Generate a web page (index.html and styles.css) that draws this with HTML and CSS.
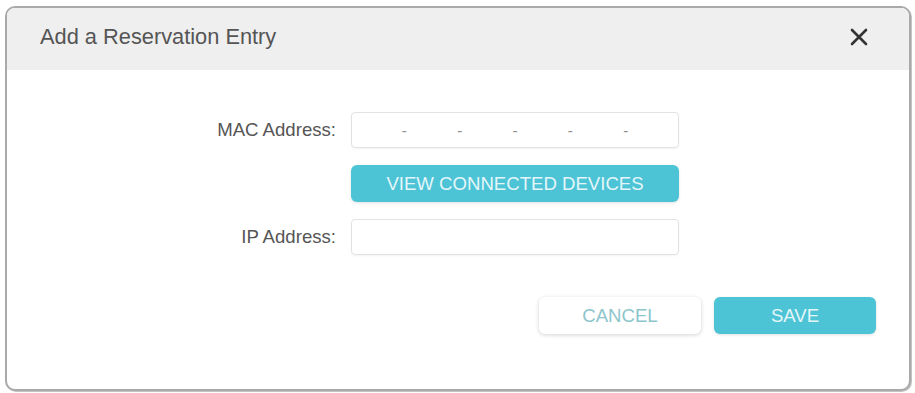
FILE: index.html
```html
<!DOCTYPE html>
<html lang="en">
<head>
    <meta charset="UTF-8">
    <meta name="viewport" content="width=device-width, initial-scale=1.0">
    <title>Add a Reservation Entry</title>
    <link rel="stylesheet" href="styles.css">
</head>
<body>
    <div class="dialog">
        <div class="dialog-header">
            <h2>Add a Reservation Entry</h2>
            <button class="close-btn" aria-label="Close">
                <svg width="18" height="18" viewBox="0 0 18 18">
                    <path d="M2 2 L16 16 M16 2 L2 16" stroke="#333" stroke-width="2.6" stroke-linecap="round" fill="none"/>
                </svg>
            </button>
        </div>

        <div class="dialog-body">
            <label class="field-label">MAC Address:</label>
            <div class="text-box mac-box">
                <input type="text"><span class="sep">-</span>
                <input type="text"><span class="sep">-</span>
                <input type="text"><span class="sep">-</span>
                <input type="text"><span class="sep">-</span>
                <input type="text"><span class="sep">-</span>
                <input type="text">
            </div>

            <span></span>
            <button class="btn btn-primary">VIEW CONNECTED DEVICES</button>

            <label class="field-label">IP Address:</label>
            <div class="text-box">
                <input type="text">
            </div>
        </div>

        <div class="dialog-footer">
            <button class="btn btn-default">CANCEL</button>
            <button class="btn btn-primary">SAVE</button>
        </div>
    </div>
</body>
</html>
```

FILE: styles.css
```css
* {
    margin: 0;
    padding: 0;
    box-sizing: border-box;
}

body {
    font-family: 'Liberation Sans', Arial, sans-serif;
    background: #fff;
    width: 915px;
    height: 393px;
    padding: 6px 4px 2px 5px;
}

.dialog {
    height: 385px;
    border: 2px solid #a9a9a9;
    border-radius: 10px;
    box-shadow: 1px 1px 0 #c4c4c4;
    background: #fff;
    overflow: hidden;
    display: flex;
    flex-direction: column;
}

.dialog-header {
    height: 62px;
    background: #efefef;
    display: flex;
    align-items: center;
    justify-content: space-between;
    padding: 0 40px 4px 33px;
}

.dialog-header h2 {
    font-size: 21.8px;
    font-weight: normal;
    color: #555;
}

.close-btn {
    background: none;
    border: none;
    width: 20px;
    height: 20px;
    display: flex;
    align-items: center;
    justify-content: center;
    cursor: pointer;
}

.dialog-body {
    display: grid;
    grid-template-columns: 329px 328px;
    column-gap: 15px;
    row-gap: 17px;
    align-items: center;
    padding-top: 42px;
}

.field-label {
    text-align: right;
    font-size: 18.6px;
    color: #555;
}

.text-box {
    height: 36px;
    border: 1px solid #e2e2e2;
    border-radius: 4px;
    box-shadow: 0 1px 2px rgba(0,0,0,0.05);
    display: flex;
    align-items: center;
}

.text-box input {
    flex: 1;
    min-width: 0;
    height: 100%;
    border: none;
    background: transparent;
    outline: none;
}

.sep {
    width: 6px;
    text-align: center;
    font-size: 15px;
    color: #8a8a8a;
}

.btn {
    height: 37px;
    border-radius: 6px;
    font-family: 'Liberation Sans', Arial, sans-serif;
    font-size: 18.6px;
    cursor: pointer;
    border: none;
}

.btn-primary {
    background: #4cc4d6;
    color: #e4f6f9;
    box-shadow: 0 1px 3px rgba(0,0,0,0.12);
}

.btn-default {
    background: #fff;
    color: #8cc5cc;
    box-shadow: 0 1px 4px rgba(0,0,0,0.18);
}

.dialog-footer {
    display: flex;
    justify-content: flex-end;
    gap: 13px;
    padding: 42px 33px 0 0;
}

.dialog-footer .btn {
    width: 162px;
}
```
